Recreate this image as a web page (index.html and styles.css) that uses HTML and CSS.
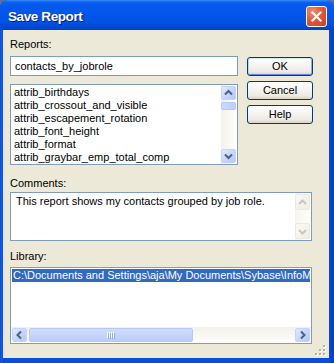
FILE: index.html
```html
<!DOCTYPE html>
<html>
<head>
<meta charset="utf-8">
<link rel="stylesheet" href="styles.css">
</head>
<body>
<div class="window">
  <div class="titlebar">
    <span class="title">Save Report</span>
    <div class="close">
      <svg width="19" height="19" viewBox="0 0 19 19"><path d="M5.5 5.5 L13.5 13.5 M13.5 5.5 L5.5 13.5" stroke="#fff" stroke-width="2.2" stroke-linecap="square"/></svg>
    </div>
  </div>
  <div class="client">
    <div class="top">
      <div class="left">
        <div class="label">Reports:</div>
        <div class="textbox">contacts_by_jobrole</div>
        <div class="listbox">
          <div class="items">
            <div class="item">attrib_birthdays</div>
            <div class="item">attrib_crossout_and_visible</div>
            <div class="item">attrib_escapement_rotation</div>
            <div class="item">attrib_font_height</div>
            <div class="item">attrib_format</div>
            <div class="item">attrib_graybar_emp_total_comp</div>
          </div>
          <div class="vscroll">
            <div class="sbtn"><svg width="15" height="14" viewBox="0 0 15 14"><path d="M4 8.5 L7.5 5 L11 8.5" fill="none" stroke="#4D6185" stroke-width="2"/></svg></div>
            <div class="vthumb"></div>
            <div class="spacer"></div>
            <div class="sbtn"><svg width="15" height="14" viewBox="0 0 15 14"><path d="M4 5.5 L7.5 9 L11 5.5" fill="none" stroke="#4D6185" stroke-width="2"/></svg></div>
          </div>
        </div>
      </div>
      <div class="buttons">
        <div class="btn default">OK</div>
        <div class="btn">Cancel</div>
        <div class="btn">Help</div>
      </div>
    </div>
    <div class="label gap-comments">Comments:</div>
    <div class="textarea">
      <div class="tatext">This report shows my contacts grouped by job role.</div>
      <div class="vscroll disabled">
        <div class="sbtn dis"><svg width="15" height="15" viewBox="0 0 15 15"><path d="M4 9 L7.5 5.5 L11 9" fill="none" stroke="#C9C7BA" stroke-width="2"/></svg></div>
        <div class="spacer"></div>
        <div class="sbtn dis"><svg width="15" height="15" viewBox="0 0 15 15"><path d="M4 6 L7.5 9.5 L11 6" fill="none" stroke="#C9C7BA" stroke-width="2"/></svg></div>
      </div>
    </div>
    <div class="label gap-library">Library:</div>
    <div class="liblist">
      <div class="libitems">
        <div class="selitem">C:\Documents and Settings\aja\My Documents\Sybase\InfoM</div>
      </div>
      <div class="hscroll">
        <div class="hbtn"><svg width="15" height="14" viewBox="0 0 15 14"><path d="M9 3.5 L5.5 7 L9 10.5" fill="none" stroke="#4D6185" stroke-width="2"/></svg></div>
        <div class="hthumb">
          <svg width="8" height="7" viewBox="0 0 8 7"><g fill="#FFFFFF"><rect x="0" y="0" width="1" height="6"/><rect x="2" y="0" width="1" height="6"/><rect x="4" y="0" width="1" height="6"/><rect x="6" y="0" width="1" height="6"/></g><g fill="#8CB0F8"><rect x="1" y="1" width="1" height="6"/><rect x="3" y="1" width="1" height="6"/><rect x="5" y="1" width="1" height="6"/><rect x="7" y="1" width="1" height="6"/></g></svg>
        </div>
        <div class="spacer"></div>
        <div class="hbtn"><svg width="15" height="14" viewBox="0 0 15 14"><path d="M6 3.5 L9.5 7 L6 10.5" fill="none" stroke="#4D6185" stroke-width="2"/></svg></div>
      </div>
    </div>
    <div class="grip">
      <svg width="12" height="12" viewBox="0 0 12 12">
        <g fill="#FFFFFF">
          <rect x="9" y="1" width="2" height="2"/>
          <rect x="5" y="5" width="2" height="2"/><rect x="9" y="5" width="2" height="2"/>
          <rect x="1" y="9" width="2" height="2"/><rect x="5" y="9" width="2" height="2"/><rect x="9" y="9" width="2" height="2"/>
        </g>
        <g fill="#B8B4A2">
          <rect x="8" y="0" width="2" height="2"/>
          <rect x="4" y="4" width="2" height="2"/><rect x="8" y="4" width="2" height="2"/>
          <rect x="0" y="8" width="2" height="2"/><rect x="4" y="8" width="2" height="2"/><rect x="8" y="8" width="2" height="2"/>
        </g>
      </svg>
    </div>
  </div>
</div>
</body>
</html>
```

FILE: styles.css
```css
html, body {
  margin: 0;
  padding: 0;
  background: #5B6E9C;
}

body {
  font-family: "Liberation Sans", Arial, sans-serif;
  font-size: 11px;
  color: #000;
}

.window {
  width: 334px;
  height: 363px;
  display: flex;
  flex-direction: column;
  background: linear-gradient(to right, #0831D9 0, #1665EE 1px, #0A57E4 2px, #0A4EDC 3px, #0A4EDC 329px, #0842D0 331px, #0A3CC4 334px);
  border-radius: 8px 8px 0 0;
  overflow: hidden;
}

.titlebar {
  height: 30px;
  flex: none;
  display: flex;
  align-items: flex-start;
  justify-content: space-between;
  background: linear-gradient(#3C8EF9 0, #0C63F0 2px, #0759EE 5px, #0256E9 14px, #0052E2 22px, #0049D4 27px, #0041C6 30px);
}

.title {
  margin: 8px 0 0 8px;
  line-height: 17px;
  font-size: 13.5px;
  font-weight: bold;
  letter-spacing: -0.4px;
  color: #fff;
  text-shadow: 1px 1px 0 #0A1883;
}

.close {
  margin: 6px 7px 0 0;
  width: 21px;
  height: 21px;
  box-sizing: border-box;
  border: 1px solid #fff;
  border-radius: 3px;
  background: radial-gradient(circle at 30% 25%, #F08E72 0, #E2593A 45%, #C83F1B 100%);
  display: flex;
  align-items: center;
  justify-content: center;
}

.close svg {
  display: block;
}

.client {
  flex: 1;
  margin: 0 5px 5px 3px;
  padding: 8px 0 0 7px;
  background: #ECE9D8;
  position: relative;
}

.top {
  display: grid;
  grid-template-columns: 228px 66px;
  column-gap: 9px;
}

.label {
  height: 13px;
  line-height: 13px;
  white-space: nowrap;
}

.left .label {
  margin-bottom: 5px;
}

.textbox {
  height: 20px;
  box-sizing: border-box;
  border: 1px solid #7F9DB9;
  background: #fff;
  padding: 0 4px;
  line-height: 18px;
  white-space: nowrap;
  margin-bottom: 8px;
}

.listbox {
  height: 81px;
  box-sizing: border-box;
  border: 1px solid #7F9DB9;
  background: #fff;
  display: flex;
}

.items {
  flex: 1;
  padding: 1px 0 0 3px;
  overflow: hidden;
}

.item {
  height: 13px;
  line-height: 13px;
  white-space: nowrap;
}

.vscroll {
  width: 16px;
  flex: none;
  display: flex;
  flex-direction: column;
  padding: 1px 1px 1px 0;
  box-sizing: border-box;
  background: linear-gradient(to right, #F3F1EA, #FEFEFB);
}

.vscroll.disabled {
  background: linear-gradient(to right, #F6F5F0, #FEFEFB);
}

.sbtn {
  height: 14px;
  box-sizing: border-box;
  border: 1px solid #C3D3FD;
  border-radius: 2px;
  background: linear-gradient(135deg, #E1EAFE 0, #C6D6FC 50%, #B4C9F6 100%);
  display: flex;
  align-items: center;
  justify-content: center;
  overflow: hidden;
}

.sbtn svg, .hbtn svg {
  flex: none;
  display: block;
}

.sbtn.dis {
  height: 16px;
  border-color: #EDEBE1;
  background: linear-gradient(135deg, #FAF9F5, #EFEDE4);
}

.vthumb {
  margin-top: 2px;
  height: 8px;
  box-sizing: border-box;
  border: 1px solid #B6C9F6;
  border-radius: 2px;
  background: linear-gradient(to right, #CCDAFC, #BCCEF8);
}

.spacer {
  flex: 1;
}

.buttons {
  padding-top: 19px;
  display: flex;
  flex-direction: column;
  gap: 5px;
}

.btn {
  height: 19px;
  box-sizing: border-box;
  border: 1px solid #003C74;
  border-radius: 3px;
  background: linear-gradient(#FFFFFF 0, #F5F4F0 45%, #ECEAE2 80%, #D8D3C7 100%);
  text-align: center;
  line-height: 17px;
}

.btn.default {
  box-shadow: inset 0 1px 0 #CEE7FF, inset 1px 0 0 #BCD4F6, inset -1px 0 0 #89ADE4, inset 0 -1px 0 #6982EE;
}

.gap-comments {
  margin-top: 12px;
  margin-bottom: 2px;
}

.textarea {
  width: 302px;
  height: 49px;
  box-sizing: border-box;
  border: 1px solid #7F9DB9;
  background: #fff;
  display: flex;
}

.tatext {
  flex: 1;
  padding: 2px 0 0 5px;
  line-height: 13px;
  white-space: nowrap;
  overflow: hidden;
}

.gap-library {
  margin-top: 9px;
  margin-bottom: 4px;
}

.liblist {
  width: 302px;
  height: 77px;
  box-sizing: border-box;
  border: 1px solid #7F9DB9;
  background: #fff;
  display: flex;
  flex-direction: column;
}

.libitems {
  flex: 1;
  padding: 1px 1px 0 1px;
  overflow: hidden;
}

.selitem {
  height: 13px;
  line-height: 13px;
  background: #316AC5;
  color: #fff;
  padding-left: 1px;
  white-space: nowrap;
  overflow: hidden;
}

.hscroll {
  height: 16px;
  flex: none;
  display: flex;
  padding: 1px 1px 1px 1px;
  box-sizing: border-box;
  background: linear-gradient(#F3F1EA, #FEFEFB);
}

.hbtn {
  width: 15px;
  box-sizing: border-box;
  border: 1px solid #C3D3FD;
  border-radius: 2px;
  background: linear-gradient(135deg, #E1EAFE 0, #C6D6FC 50%, #B4C9F6 100%);
  display: flex;
  align-items: center;
  justify-content: center;
  overflow: hidden;
}

.hthumb {
  margin-left: 2px;
  width: 164px;
  box-sizing: border-box;
  border: 1px solid #B6C9F6;
  border-radius: 2px;
  background: linear-gradient(#D0DDFD, #BACCF8);
  display: flex;
  align-items: center;
  justify-content: center;
}

.hthumb svg {
  display: block;
}

.grip {
  position: absolute;
  right: 2px;
  bottom: 1px;
  width: 12px;
  height: 12px;
}

.grip svg {
  display: block;
}
```
